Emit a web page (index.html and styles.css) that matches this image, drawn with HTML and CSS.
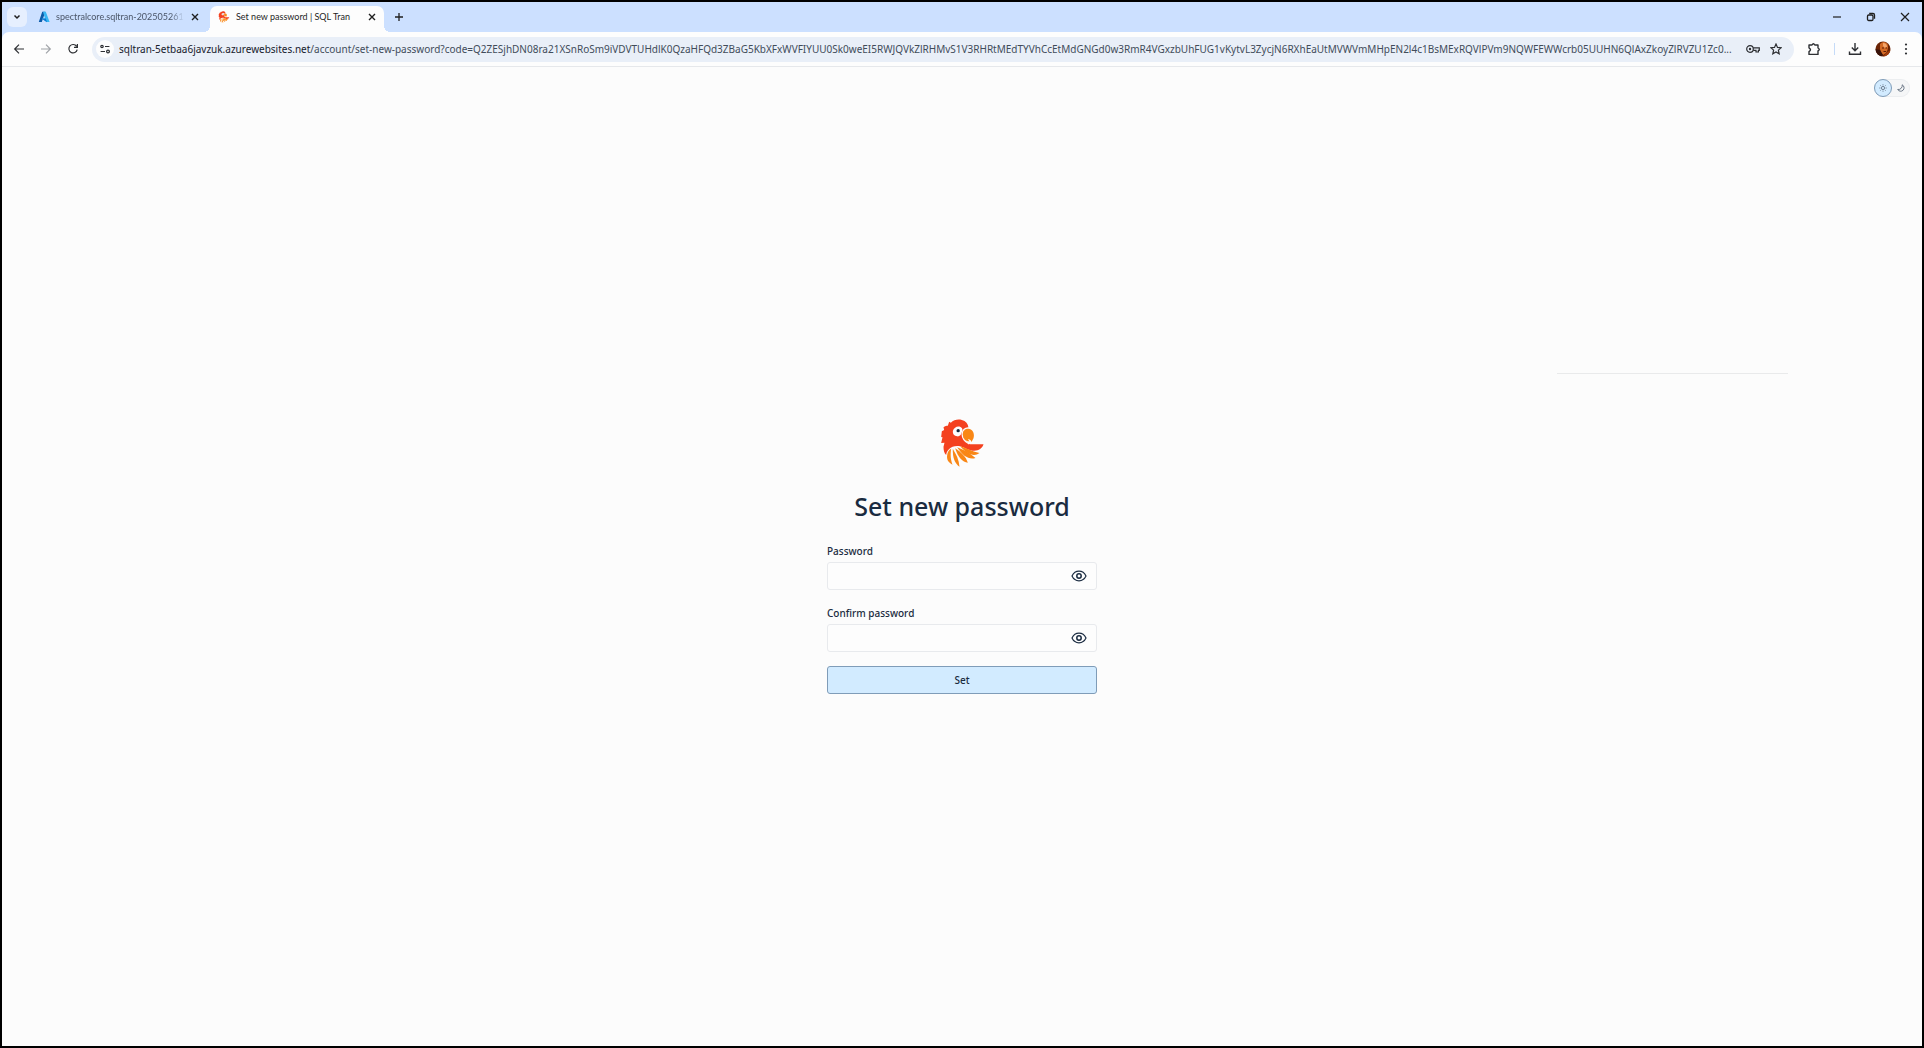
FILE: index.html
```html
<!DOCTYPE html>
<html lang="en">
<head>
    <meta charset="UTF-8">
    <meta name="viewport" content="width=device-width, initial-scale=1.0">
    <title>Set new password | SQL Tran</title>
    <link rel="stylesheet" href="styles.css">
</head>
<body>
    <!-- Shared parrot logo -->
    <svg class="sprite" aria-hidden="true">
        <symbol id="parrot" viewBox="122 56 128 144">
            <path fill="#f4411f" d="M124 93 L131 89 L129 81 C134 77 138 76 142 76 L146 64 L151 67 C160 58 173 56 184 59 C196 62 203 70 204 82 C192 83 187 91 188 103 C189 116 194 121 203 129 L208 132 L249 132 C245 146 232 153 216 151 C204 149 196 145 188 141 C171 133 155 137 146 146 C140 152 137 159 137 164 C131 158 129 149 129 139 L132 127 L122 128 L126 111 L122 110 Z"/>
            <path fill="#fdfdfd" d="M157 92 C161 81 171 76 180 80 C187 83 187 90 184 96 C182 104 177 109 170 108 C161 107 156 101 157 92 Z"/>
            <circle cx="173" cy="91" r="5" fill="#12283d"/>
            <path fill="none" stroke="#fdfdfd" stroke-width="4" d="M205 83 C193 82 185 90 185 102 C185 116 194 125 206 131"/>
            <path fill="#f98716" d="M187 101 C187 90 195 84 205 85 C218 87 223 101 219 114 L213 125 C211 118 207 116 202 117 L207 123 C196 124 187 115 187 101 Z"/>
            <path fill="#f98716" d="M152 145 C150 158 149 173 156 193 C143 187 138 177 140 165 C141 155 145 148 152 145 Z"/>
            <path fill="#f98716" d="M157 146 C168 163 175 178 177 199 C163 190 156 172 157 146 Z"/>
            <path fill="#f98716" d="M164 144 C182 156 196 169 202 187 C186 186 173 172 164 144 Z"/>
            <path fill="#f98716" d="M170 141 C189 149 208 157 225 173 C206 179 187 168 170 141 Z"/>
            <path fill="#f98716" d="M179 138 C197 143 213 153 237 158 C222 170 201 164 179 138 Z"/>
        </symbol>
        <symbol id="eye" viewBox="0 0 16 12">
            <path fill="none" stroke="currentColor" stroke-width="1.2" d="M1 6 C4 -0.4 12 -0.4 15 6 C12 12.4 4 12.4 1 6 Z"/>
            <circle cx="8" cy="6" r="2.2" fill="none" stroke="currentColor" stroke-width="1.5"/>
        </symbol>
        <symbol id="cross" viewBox="0 0 10 10">
            <path fill="none" stroke="currentColor" stroke-width="1.4" d="M2 2 L8 8 M8 2 L2 8"/>
        </symbol>
    </svg>

    <div class="window">
        <!-- Tab strip -->
        <div class="tab-strip">
            <button class="tab-search" aria-label="Search tabs">
                <svg width="8" height="8" viewBox="0 0 8 8"><path d="M1.5 2.5 L4 5 L6.5 2.5" fill="none" stroke="currentColor" stroke-width="1.5"/></svg>
            </button>
            <div class="tab">
                <svg width="12" height="12" viewBox="0 0 12 12">
                    <path fill="#0b5aa8" d="M4.2 .8 H7.3 L3.8 11 H.8 Z"/>
                    <path fill="#38b6f2" d="M5 .8 H7.8 L11.6 11 H8.5 L3.6 7.6 H7 Z"/>
                    <path fill="#0c78d4" d="M3.6 7.6 H7.8 L9 11.2 Z"/>
                </svg>
                <a class="tab-title faded" href="#">spectralcore.sqltran-202505261</a>
                <button class="tab-close" aria-label="Close tab"><svg width="10" height="10"><use href="#cross"/></svg></button>
            </div>
            <div class="tab active">
                <svg width="12" height="12"><use href="#parrot"/></svg>
                <a class="tab-title" href="#">Set new password | SQL Tran</a>
                <button class="tab-close" aria-label="Close tab"><svg width="10" height="10"><use href="#cross"/></svg></button>
            </div>
            <button class="new-tab" aria-label="New tab">
                <svg width="10" height="10" viewBox="0 0 10 10"><path d="M5 1 V9 M1 5 H9" stroke="currentColor" stroke-width="1.3"/></svg>
            </button>
            <div class="window-controls">
                <button aria-label="Minimize"><svg width="10" height="10" viewBox="0 0 10 10"><path d="M1 5 H9" stroke="currentColor" stroke-width="1.2"/></svg></button>
                <button aria-label="Restore"><svg width="10" height="10" viewBox="0 0 10 10"><g fill="none" stroke="currentColor" stroke-width="1.3"><rect x="1.5" y="3" width="5.5" height="5.5" rx="1.2"/><path d="M3.2 1.5 H7 Q8.5 1.5 8.5 3 V6.8"/></g></svg></button>
                <button aria-label="Close"><svg width="10" height="10" viewBox="0 0 10 10"><path d="M1 1 L9 9 M9 1 L1 9" stroke="currentColor" stroke-width="1.2"/></svg></button>
            </div>
        </div>

        <!-- Toolbar -->
        <div class="toolbar">
            <div class="nav-buttons">
                <button aria-label="Back"><svg width="12" height="12" viewBox="0 0 12 12"><path d="M11 6 H2 M6 1.7 L1.7 6 L6 10.3" fill="none" stroke="currentColor" stroke-width="1.2"/></svg></button>
                <button aria-label="Forward" disabled><svg width="12" height="12" viewBox="0 0 12 12"><path d="M1 6 H10 M6 1.7 L10.3 6 L6 10.3" fill="none" stroke="currentColor" stroke-width="1.2"/></svg></button>
                <button aria-label="Reload"><svg width="12" height="12" viewBox="0 0 12 12"><path d="M9.6 3.4 A4.2 4.2 0 1 0 10.2 6.6 M10.4 1 V4.3 H7" fill="none" stroke="currentColor" stroke-width="1.2"/></svg></button>
            </div>
            <div class="address-bar">
                <button class="site-info" aria-label="View site information">
                    <svg width="10" height="10" viewBox="0 0 10 10"><g fill="none" stroke="currentColor" stroke-width="1.2"><circle cx="2" cy="2.5" r="1.2"/><path d="M5 2.5 H9.4 M.6 7.5 H5"/><circle cx="8" cy="7.5" r="1.4"/></g></svg>
                </button>
                <label class="host" for="url">sqltran-5etbaa6javzuk.azurewebsites.net</label>
                <input class="url" id="url" type="text" value="/account/set-new-password?code=Q2ZESjhDN08ra21XSnRoSm9iVDVTUHdlK0QzaHFQd3ZBaG5KbXFxWVFIYUU0Sk0weEI5RWJQVkZlRHMvS1V3RHRtMEdTYVhCcEtMdGNGd0w3RmR4VGxzbUhFUG1vKytvL3ZycjN6RXhEaUtMVWVmMHpEN2l4c1BsMExRQVlPVm9NQWFEWWcrb05UUHN6QlAxZkoyZlRVZU1Zc0...">
                <button class="bar-icon" aria-label="Passwords">
                    <svg width="14" height="10" viewBox="0 0 14 10"><circle cx="4" cy="5" r="3.3" fill="none" stroke="currentColor" stroke-width="1.2"/><circle cx="4" cy="5" r="1.2" fill="currentColor"/><path d="M7.2 3.8 H13.3 V6.3 H12.4 V8 H10 V6.3 H7.2" fill="none" stroke="currentColor" stroke-width="1.2"/></svg>
                </button>
                <button class="bar-icon" aria-label="Bookmark this tab">
                    <svg width="12" height="12" viewBox="0 0 12 12"><path d="M6 1 L7.5 4.4 L11.2 4.7 L8.4 7.1 L9.2 10.8 L6 8.9 L2.8 10.8 L3.6 7.1 L.8 4.7 L4.5 4.4 Z" fill="none" stroke="currentColor" stroke-width="1.2"/></svg>
                </button>
            </div>
            <div class="actions">
                <button aria-label="Extensions"><svg width="14" height="14" viewBox="0 0 14 14"><path d="M2 3 H5 Q6.4 .4 7.8 3 H11 V6 Q13.6 7.4 11 8.8 V12.4 H2 V9.6 Q5 7.7 2 5.8 Z" fill="none" stroke="currentColor" stroke-width="1.4" stroke-linejoin="round"/></svg></button>
                <span class="separator"></span>
                <button aria-label="Downloads"><svg width="14" height="14" viewBox="0 0 14 14"><path d="M7 1 V8.5 M3.8 5.5 L7 8.7 L10.2 5.5 M1.5 9.5 V12.2 H12.5 V9.5" fill="none" stroke="currentColor" stroke-width="1.4"/></svg></button>
                <button aria-label="Profile">
                    <svg width="16" height="16" viewBox="0 0 16 16">
                        <defs><clipPath id="round"><circle cx="8" cy="8" r="7.5"/></clipPath></defs>
                        <g clip-path="url(#round)">
                            <path fill="#6b2405" d="M0 0 H16 V16 H0 Z"/>
                            <path fill="#d46a25" d="M5 3 Q9 -1 12.5 3 Q14 8 11 12 L8 14 Q5 11 5 8 Z"/>
                            <path fill="#f4a56a" d="M8 2 Q12 2 12 6 L10 7 L8 5 Z"/>
                            <path fill="#38130a" d="M0 8 L5 9 L8 14 L6 16 H0 Z"/>
                            <path fill="#a33c0b" d="M12 11 L16 9 V16 H8 Z"/>
                            <path stroke="#5c1c08" d="M7 7 H9 M10.5 7 H12 M8.5 10.5 H11"/>
                        </g>
                    </svg>
                </button>
                <button aria-label="Menu"><svg width="4" height="12" viewBox="0 0 4 12" fill="currentColor"><circle cx="2" cy="1.5" r="1.1"/><circle cx="2" cy="6" r="1.1"/><circle cx="2" cy="10.5" r="1.1"/></svg></button>
            </div>
        </div>

        <!-- Page -->
        <main class="page">
            <div class="theme-switch">
                <button class="selected" aria-label="Light theme">
                    <svg width="8" height="8" viewBox="0 0 8 8"><circle cx="4" cy="4" r="1.6" fill="none" stroke="currentColor" stroke-width=".8"/><path d="M4 .3 V1.4 M4 6.6 V7.7 M.3 4 H1.4 M6.6 4 H7.7 M1.4 1.4 L2.1 2.1 M5.9 5.9 L6.6 6.6 M6.6 1.4 L5.9 2.1 M2.1 5.9 L1.4 6.6" stroke="currentColor" stroke-width=".8"/></svg>
                </button>
                <button aria-label="Dark theme">
                    <svg width="8" height="8" viewBox="0 0 8 8"><path d="M5.2 .8 A3.4 3.4 0 1 1 .7 5.5 A4 4 0 0 0 5.2 .8 Z" fill="none" stroke="currentColor" stroke-width=".9"/></svg>
                </button>
            </div>
            <hr class="rule">
            <form class="password-form">
                <svg class="logo" width="43" height="48"><use href="#parrot"/></svg>
                <h1>Set new password</h1>
                <div class="fields">
                    <div class="field">
                        <label for="password">Password</label>
                        <div class="input-box">
                            <input type="password" id="password">
                            <button type="button" aria-label="Show password"><svg width="16" height="12"><use href="#eye"/></svg></button>
                        </div>
                    </div>
                    <div class="field">
                        <label for="confirm">Confirm password</label>
                        <div class="input-box">
                            <input type="password" id="confirm">
                            <button type="button" aria-label="Show password"><svg width="16" height="12"><use href="#eye"/></svg></button>
                        </div>
                    </div>
                </div>
                <button class="submit" type="submit">Set</button>
            </form>
        </main>
    </div>
</body>
</html>
```
FILE: styles.css
```css
* {
    box-sizing: border-box;
}
body {
    margin: 0;
    font-family: "Noto Sans", "Open Sans", sans-serif;
    font-size: 10px;
    color: #1a2b40;
    background-color: #000;
}
button, input {
    font: inherit;
    color: inherit;
    border: none;
    background: none;
    padding: 0;
    margin: 0;
}
button {
    display: flex;
    align-items: center;
    justify-content: center;
    cursor: pointer;
}
svg {
    flex: none;
}
.sprite {
    position: absolute;
    width: 0;
    height: 0;
}
.window {
    display: flex;
    flex-direction: column;
    min-height: 100vh;
    border: 2px solid #000;
    background-color: #cce0ff;
}

/* Tab strip */
.tab-strip {
    display: flex;
    align-items: flex-end;
    height: 30px;
    padding-left: 5px;
    color: #1f1f1f;
}
.tab-search {
    width: 20px;
    height: 20px;
    margin: 0 3px 5px 0;
    border-radius: 6px;
    background-color: #e6effe;
}
.tab {
    display: flex;
    align-items: center;
    gap: 6px;
    width: 180px;
    height: 26px;
    padding: 0 10px 4px 8px;
}
.tab-title {
    flex: 1;
    min-width: 0;
    overflow: hidden;
    font-family: Lato, sans-serif;
    font-size: 9px;
    line-height: 14px;
    white-space: nowrap;
    color: #1f1f1f;
    text-decoration: none;
}
.faded {
    color: #4a5568;
    mask-image: linear-gradient(to right, #000 90%, transparent);
}
.tab-close {
    width: 10px;
    height: 10px;
}
.tab.active {
    position: relative;
    width: 174px;
    padding-right: 7px;
    border-radius: 7px 7px 0 0;
    background-color: #fdfdfd;
}
.tab.active::before,
.tab.active::after {
    content: "";
    position: absolute;
    bottom: 0;
    width: 6px;
    height: 6px;
}
.tab.active::before {
    right: 100%;
    background: radial-gradient(circle at 0 0, transparent 6px, #fdfdfd 6px);
}
.tab.active::after {
    left: 100%;
    background: radial-gradient(circle at 100% 0, transparent 6px, #fdfdfd 6px);
}
.new-tab {
    align-self: center;
    width: 30px;
    height: 26px;
}
.window-controls {
    display: flex;
    align-self: center;
    margin-left: auto;
}
.window-controls button {
    width: 34px;
    height: 26px;
}

/* Toolbar */
.toolbar {
    display: flex;
    align-items: center;
    height: 35px;
    border-bottom: 1px solid #e6e8eb;
    border-radius: 7px 7px 0 0;
    background-color: #fdfdfd;
    color: #2d2f33;
}
.nav-buttons {
    display: flex;
    gap: 15px;
    padding: 0 13px 0 11px;
}
.nav-buttons button {
    width: 12px;
    height: 12px;
}
.nav-buttons button:disabled {
    color: #a0a3a8;
}
.address-bar {
    display: flex;
    flex: 1;
    align-items: center;
    min-width: 0;
    height: 25px;
    padding: 0 12px 0 4px;
    border-radius: 13px;
    background-color: #e9eff8;
}
.site-info {
    width: 18px;
    height: 18px;
    margin-right: 5px;
    border-radius: 50%;
    background-color: #fdfdfd;
}
.host {
    color: #16202c;
}
.url {
    flex: 1;
    min-width: 0;
    color: #414c5a;
    text-overflow: ellipsis;
}
.bar-icon {
    margin-left: 10px;
}
.actions {
    display: flex;
    align-items: center;
    gap: 13px;
    padding: 0 14px 0 13px;
}
.separator {
    width: 1px;
    height: 12px;
    background-color: #c5dbf8;
}

/* Page */
.page {
    position: relative;
    display: flex;
    flex: 1;
    align-items: center;
    justify-content: center;
    background-color: #fcfcfc;
}
.theme-switch {
    position: absolute;
    top: 12px;
    right: 12px;
    display: flex;
    border-radius: 10px;
    background-color: #f5f6f7;
    box-shadow: inset 0 0 0 1px #eceef0;
    color: #5d6b7c;
}
.theme-switch button {
    width: 18px;
    height: 18px;
    border-radius: 50%;
}
.theme-switch .selected {
    border: 1px solid #7f9cb8;
    background-color: #d2ebff;
}
.rule {
    position: absolute;
    top: 306px;
    right: 7%;
    width: 12%;
    margin: 0;
    border: none;
    border-top: 1px solid #e9eaeb;
}
.password-form {
    display: flex;
    flex-direction: column;
    width: 270px;
}
.logo {
    align-self: center;
}
h1 {
    margin: 21px 0 20px;
    font-size: 25px;
    font-weight: 500;
    line-height: 36px;
    text-align: center;
    white-space: nowrap;
}
.fields {
    display: flex;
    flex-direction: column;
    gap: 16px;
    margin-bottom: 14px;
}
.field {
    display: flex;
    flex-direction: column;
    gap: 4px;
}
.field label {
    font-weight: 500;
    line-height: 14px;
}
.input-box {
    display: flex;
    height: 28px;
    padding-right: 9px;
    border: 1px solid #e8eaed;
    border-radius: 3px;
    background-color: #fdfdfd;
}
.input-box input {
    flex: 1;
    min-width: 0;
    padding: 0 8px;
}
.submit {
    height: 28px;
    border: 1px solid #7f9cb8;
    border-radius: 3px;
    background-color: #d2ebff;
    font-weight: 500;
}
```
